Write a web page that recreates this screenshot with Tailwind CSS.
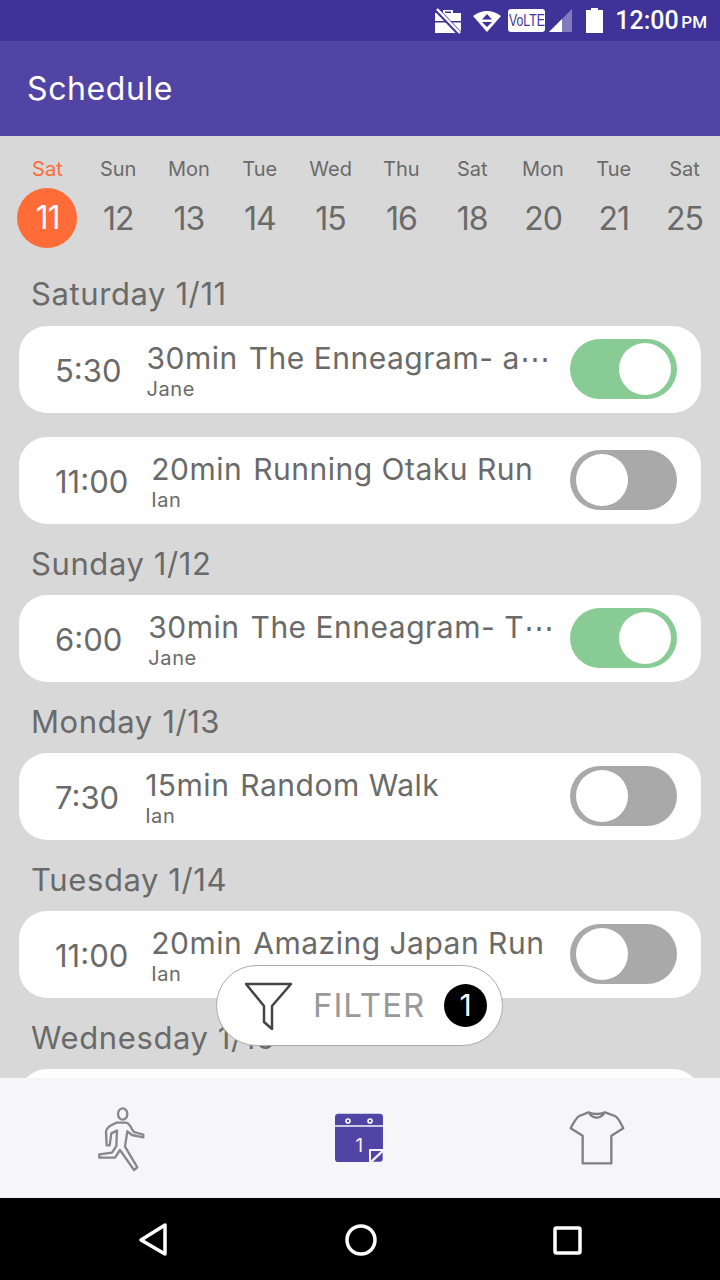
<!DOCTYPE html>
<html lang="en">
  <head>
    <meta charset="UTF-8" />
    <meta name="viewport" content="width=device-width, initial-scale=1.0" />
    <title>Schedule</title>
    <script src="https://cdn.jsdelivr.net/npm/@tailwindcss/browser@4"></script>
  </head>
  <body class="font-['Inter','Liberation_Sans',sans-serif] bg-[#d8d8d8]">
    <div class="relative w-[720px] h-[1280px] overflow-hidden flex flex-col text-[#6a6a6a]">
      <!-- status bar -->
      <div class="h-[41px] shrink-0 bg-[#3f3399] flex items-center justify-end pr-[13px] text-white">
        <svg class="w-[28px] h-[28px] mr-[10px]" viewBox="0 0 28 28" fill="white">
          <path fill-rule="evenodd" d="M9 6V3h10v3h8v8H1V6zM11 6h6V4.500h-6zM1 15.500h26V26H1z" />
          <path d="M2 2L26 27" stroke="#3f3399" stroke-width="5" />
          <path d="M3 2L26 26" stroke="white" stroke-width="2.500" />
        </svg>
        <svg class="w-[30px] h-[24px] mr-[6px]" viewBox="0 0 30 24" fill="white">
          <path d="M1 7Q15 -3 29 7L15 23z" />
          <path d="M15 5l5 5.500H10zM10 13h10l-5 5z" fill="#3f3399" />
        </svg>
        <div class="w-[37px] h-[23px] bg-white rounded-[3px] overflow-hidden mr-[4px] flex justify-center">
          <span class="text-[#3f3399] text-[17px] leading-[23px] font-['Liberation_Sans',sans-serif] scale-x-[0.72] whitespace-nowrap">VoLTE</span>
        </div>
        <svg class="w-[24px] h-[24px] mr-[13px]" viewBox="0 0 24 24">
          <path d="M0 23L23 0V23z" fill="white" fill-opacity="0.350" />
          <path d="M0 23L13 10V23z" fill="white" />
        </svg>
        <svg class="w-[17px] h-[25px] mr-[12px]" viewBox="0 0 17 25" fill="white">
          <path d="M5 0h7v2h5v23H0V2h5z" />
        </svg>
        <span class="font-['Roboto',sans-serif] text-[25px] font-medium w-[66px]">12:00</span>
        <span class="font-['Roboto',sans-serif] text-[17px] font-medium mt-[5px]">PM</span>
      </div>

      <!-- header -->
      <div class="h-[95px] shrink-0 bg-[#5244a5] flex items-center pl-[27px]">
        <h1 class="text-white text-[32px] tracking-[0.6px]">Schedule</h1>
      </div>

      <!-- date strip -->
      <div class="shrink-0 flex pl-[12px] pt-[20px] text-center">
        <div class="w-[71px] flex flex-col items-center">
          <span class="text-[20px] leading-[26px] text-[#ff6c37]">Sat</span>
          <span class="w-[60px] h-[60px] mt-[6px] rounded-full bg-[#ff6c37] text-white text-[32px] leading-[60px] tracking-[-1px]">11</span>
        </div>
        <div class="w-[71px] flex flex-col items-center"><span class="text-[20px] leading-[26px]">Sun</span><span class="h-[60px] mt-[6px] text-[32px] leading-[62px] tracking-[-1px]">12</span></div>
        <div class="w-[71px] flex flex-col items-center"><span class="text-[20px] leading-[26px]">Mon</span><span class="h-[60px] mt-[6px] text-[32px] leading-[62px] tracking-[-1px]">13</span></div>
        <div class="w-[71px] flex flex-col items-center"><span class="text-[20px] leading-[26px]">Tue</span><span class="h-[60px] mt-[6px] text-[32px] leading-[62px] tracking-[-1px]">14</span></div>
        <div class="w-[71px] flex flex-col items-center"><span class="text-[20px] leading-[26px]">Wed</span><span class="h-[60px] mt-[6px] text-[32px] leading-[62px] tracking-[-1px]">15</span></div>
        <div class="w-[71px] flex flex-col items-center"><span class="text-[20px] leading-[26px]">Thu</span><span class="h-[60px] mt-[6px] text-[32px] leading-[62px] tracking-[-1px]">16</span></div>
        <div class="w-[71px] flex flex-col items-center"><span class="text-[20px] leading-[26px]">Sat</span><span class="h-[60px] mt-[6px] text-[32px] leading-[62px] tracking-[-1px]">18</span></div>
        <div class="w-[71px] flex flex-col items-center"><span class="text-[20px] leading-[26px]">Mon</span><span class="h-[60px] mt-[6px] text-[32px] leading-[62px] tracking-[-1px]">20</span></div>
        <div class="w-[71px] flex flex-col items-center"><span class="text-[20px] leading-[26px]">Tue</span><span class="h-[60px] mt-[6px] text-[32px] leading-[62px] tracking-[-1px]">21</span></div>
        <div class="w-[71px] flex flex-col items-center"><span class="text-[20px] leading-[26px]">Sat</span><span class="h-[60px] mt-[6px] text-[32px] leading-[62px] tracking-[-1px]">25</span></div>
      </div>

      <!-- schedule list -->
      <div class="flex-1 min-h-0 overflow-hidden px-[19px]">
        <h2 class="mt-[22px] pl-[12px] h-[56px] text-[31px] leading-[48px] tracking-[0.6px]">Saturday 1/11</h2>

        <div class="h-[87px] bg-white rounded-[28px] flex items-center pl-[36px] pr-[24px]">
          <span class="text-[31px] leading-[40px] mt-[3px] shrink-0 mr-[25px]">5:30</span>
          <div class="flex-1 min-w-0 pt-[3px]">
            <p class="text-[30px] leading-[34px] tracking-[0.5px] whitespace-nowrap"><span class="mr-[11px]">30min</span>The Enneagram- a⋯</p>
            <p class="text-[20px] leading-[26px] tracking-[0.6px] mt-[1px]">Jane</p>
          </div>
          <div class="w-[107px] h-[60px] -mt-[2px] shrink-0 ml-[12px] rounded-full bg-[#88cb94] flex items-center justify-end p-[6px]"><span class="w-[52px] h-[52px] rounded-full bg-white"></span></div>
        </div>

        <div class="mt-[24px] h-[87px] bg-white rounded-[28px] flex items-center pl-[36px] pr-[24px]">
          <span class="text-[31px] leading-[40px] mt-[3px] shrink-0 mr-[23px]">11:00</span>
          <div class="flex-1 min-w-0 pt-[3px]">
            <p class="text-[30px] leading-[34px] tracking-[0.5px] whitespace-nowrap"><span class="mr-[11px]">20min</span>Running Otaku Run</p>
            <p class="text-[20px] leading-[26px] tracking-[0.6px] mt-[1px]">Ian</p>
          </div>
          <div class="w-[107px] h-[60px] -mt-[2px] shrink-0 ml-[12px] rounded-full bg-[#a9a9a9] flex items-center p-[6px]"><span class="w-[52px] h-[52px] rounded-full bg-white"></span></div>
        </div>

        <h2 class="pl-[12px] h-[71px] pt-[16px] text-[31px] leading-[48px] tracking-[0.6px]">Sunday 1/12</h2>

        <div class="h-[87px] bg-white rounded-[28px] flex items-center pl-[36px] pr-[24px]">
          <span class="text-[31px] leading-[40px] mt-[3px] shrink-0 mr-[26px]">6:00</span>
          <div class="flex-1 min-w-0 pt-[3px]">
            <p class="text-[30px] leading-[34px] tracking-[0.5px] whitespace-nowrap"><span class="mr-[11px]">30min</span>The Enneagram- T⋯</p>
            <p class="text-[20px] leading-[26px] tracking-[0.6px] mt-[1px]">Jane</p>
          </div>
          <div class="w-[107px] h-[60px] -mt-[2px] shrink-0 ml-[12px] rounded-full bg-[#88cb94] flex items-center justify-end p-[6px]"><span class="w-[52px] h-[52px] rounded-full bg-white"></span></div>
        </div>

        <h2 class="pl-[12px] h-[71px] pt-[16px] text-[31px] leading-[48px] tracking-[0.6px]">Monday 1/13</h2>

        <div class="h-[87px] bg-white rounded-[28px] flex items-center pl-[36px] pr-[24px]">
          <span class="text-[31px] leading-[40px] mt-[3px] shrink-0 mr-[26px]">7:30</span>
          <div class="flex-1 min-w-0 pt-[3px]">
            <p class="text-[30px] leading-[34px] tracking-[0.5px] whitespace-nowrap"><span class="mr-[11px]">15min</span>Random Walk</p>
            <p class="text-[20px] leading-[26px] tracking-[0.6px] mt-[1px]">Ian</p>
          </div>
          <div class="w-[107px] h-[60px] -mt-[2px] shrink-0 ml-[12px] rounded-full bg-[#a9a9a9] flex items-center p-[6px]"><span class="w-[52px] h-[52px] rounded-full bg-white"></span></div>
        </div>

        <h2 class="pl-[12px] h-[71px] pt-[16px] text-[31px] leading-[48px] tracking-[0.6px]">Tuesday 1/14</h2>

        <div class="h-[87px] bg-white rounded-[28px] flex items-center pl-[36px] pr-[24px]">
          <span class="text-[31px] leading-[40px] mt-[3px] shrink-0 mr-[23px]">11:00</span>
          <div class="flex-1 min-w-0 pt-[3px]">
            <p class="text-[30px] leading-[34px] tracking-[0.5px] whitespace-nowrap"><span class="mr-[11px]">20min</span>Amazing Japan Run</p>
            <p class="text-[20px] leading-[26px] tracking-[0.6px] mt-[1px]">Ian</p>
          </div>
          <div class="w-[107px] h-[60px] -mt-[2px] shrink-0 ml-[12px] rounded-full bg-[#a9a9a9] flex items-center p-[6px]"><span class="w-[52px] h-[52px] rounded-full bg-white"></span></div>
        </div>

        <h2 class="pl-[12px] h-[71px] pt-[16px] text-[31px] leading-[48px] tracking-[0.6px]">Wednesday 1/15</h2>

        <div class="h-[87px] bg-white rounded-[28px]"></div>
      </div>

      <!-- bottom tabs -->
      <div class="h-[120px] shrink-0 bg-[#f6f6f9] relative flex items-center">
        <svg class="absolute left-[70px] top-[12px] w-[100px] h-[100px]" viewBox="0 0 300 300" fill="none" stroke="#888888" stroke-width="7" stroke-linejoin="round" stroke-linecap="round">
          <ellipse cx="158" cy="72" rx="14" ry="17" />
          <path d="M140 98H168Q178 100 186 118L192 126L220 134V142L186 135L172 124L165 170L202 232L192 240L150 180L135 203H88V193L126 188L139 168L141 122L124 130L119 166H110L108 125Q110 112 125 105z" />
        </svg>
        <svg class="absolute left-[310px] top-[17px] w-[100px] h-[85px]" viewBox="0 0 300 255">
          <rect x="75" y="56" width="144" height="145" rx="10" fill="#5244a5" />
          <path d="M75 93H219" stroke="#f6f6f9" stroke-width="4" />
          <circle cx="114" cy="78" r="6" fill="none" stroke="#f6f6f9" stroke-width="5" />
          <circle cx="180" cy="78" r="6" fill="none" stroke="#f6f6f9" stroke-width="5" />
          <text x="148" y="170" text-anchor="middle" fill="#f6f6f9" font-size="56">1</text>
          <path d="M180 165H221V192Q221 203 210 203H180z" fill="#5244a5" stroke="#f6f6f9" stroke-width="6" />
          <path d="M184 200L218 168" stroke="#f6f6f9" stroke-width="7" />
        </svg>
        <svg class="absolute left-[550px] top-[17px] w-[100px] h-[85px]" viewBox="0 0 300 255" fill="none" stroke="#808080" stroke-width="7" stroke-linejoin="round">
          <path d="M115 52L88 63Q78 68 62 100L98 122V205H184V122L220 100Q205 68 195 63L165 52Q140 62 115 52z" />
          <path d="M118 56Q140 80 162 56" />
        </svg>
      </div>

      <!-- android nav -->
      <div class="h-[82px] shrink-0 bg-black relative">
        <svg class="absolute left-[130px] top-[18px] w-[460px] h-[48px]" viewBox="0 0 460 48" fill="none" stroke="white" stroke-width="3.500" stroke-linejoin="round">
          <path d="M35 9V38L11 24z" />
          <circle cx="231" cy="24" r="14" />
          <rect x="425" y="12" width="25" height="25" rx="1.500" />
        </svg>
      </div>

      <!-- filter pill -->
      <div class="absolute left-[216px] top-[965px] w-[287px] h-[81px] bg-white border border-[#aaaaaa] rounded-full flex items-center pl-[28px]">
        <svg class="w-[48px] h-[48px] shrink-0" viewBox="0 0 48 48" fill="none" stroke="#444444" stroke-width="2.500" stroke-linejoin="round">
          <path d="M1 2H46L27 24V47L19 40V24z" />
        </svg>
        <span class="ml-[20px] text-[33px] text-[#999999] tracking-[1px]">FILTER</span>
        <span class="ml-auto mr-[15px] w-[43px] h-[43px] rounded-full bg-black text-white text-[30px] leading-[43px] text-center">1</span>
      </div>
    </div>
  </body>
</html>
